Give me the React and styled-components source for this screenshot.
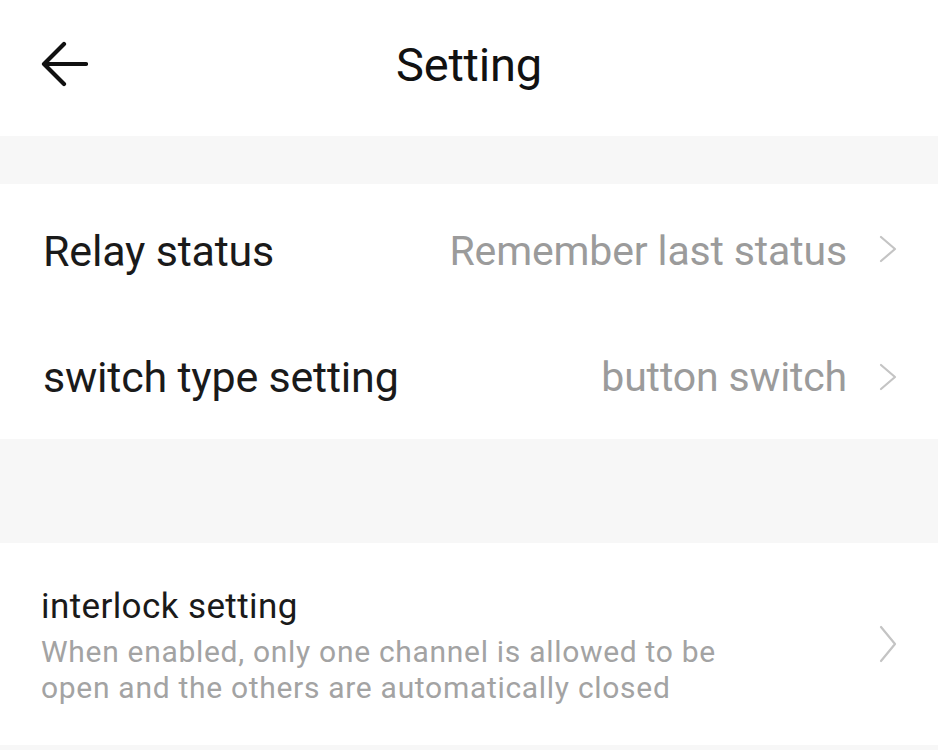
import React from "react";
import styled, { createGlobalStyle } from "styled-components";

const Global = createGlobalStyle`
  html, body { margin: 0; padding: 0; background: #ffffff; }
  body { font-family: Roboto, "Noto Sans", sans-serif; -webkit-font-smoothing: antialiased; }
`;

const Page = styled.div`
  width: 938px;
  height: 750px;
  background: #f7f7f7;
  overflow: hidden;
  display: flex;
  flex-direction: column;
`;

const Header = styled.header`
  height: 136px;
  background: #ffffff;
  display: grid;
  grid-template-columns: 120px 1fr 120px;
  align-items: center;
`;

const BackButton = styled.button`
  border: 0;
  background: none;
  padding: 0 0 8px 40px;
  display: flex;
  align-items: center;
  cursor: pointer;
`;

const Title = styled.h1`
  margin: 0 0 8px;
  text-align: center;
  font-size: 47px;
  font-weight: 400;
  color: #111111;
  letter-spacing: -0.2px;
`;

const Gap = styled.div`
  height: ${(p) => p.h}px;
  flex: none;
`;

const Section = styled.section`
  background: #ffffff;
  display: flex;
  flex-direction: column;
`;

const Row = styled.div`
  height: ${(p) => p.h}px;
  padding: 0 40px 0 43px;
  display: flex;
  align-items: center;
  gap: 31px;
`;

const Label = styled.div`
  flex: 1;
  font-size: 43px;
  color: #1a1a1a;
  letter-spacing: -0.2px;
  padding-top: ${(p) => p.pt || 0}px;
`;

const Value = styled.div`
  font-size: 41px;
  color: #9b9b9b;
  letter-spacing: -0.15px;
  padding-top: ${(p) => p.pt || 0}px;
`;

const Texts = styled.div`
  flex: 1;
  display: flex;
  flex-direction: column;
  margin-left: -2px;
  padding-top: 5px;
`;

const SubTitle = styled.div`
  font-size: 35px;
  color: #1a1a1a;
  letter-spacing: 0.4px;
  line-height: 40px;
  margin-bottom: 7px;
`;

const Desc = styled.div`
  font-size: 30px;
  line-height: 36px;
  color: #a3a3a3;
  letter-spacing: 0.7px;
  max-width: 700px;
`;

const Chevron = ({ h = 28 }) => (
  <svg width="20" height={h} viewBox={`0 0 20 ${h}`} fill="none">
    <path
      d={`M3 2 L17 ${h / 2} L3 ${h - 2}`}
      stroke="#c4c4c4"
      strokeWidth="2.2"
      strokeLinecap="round"
      strokeLinejoin="round"
    />
  </svg>
);

const BackArrow = () => (
  <svg width="48" height="46" viewBox="0 0 48 46" fill="none">
    <path
      d="M46 23 H6 M24 3 L4 23 L24 43"
      stroke="#111111"
      strokeWidth="4.2"
      strokeLinecap="round"
      strokeLinejoin="round"
    />
  </svg>
);

export default function App() {
  return (
    <>
      <Global />
      <Page>
        <Header>
          <BackButton aria-label="back">
            <BackArrow />
          </BackButton>
          <Title>Setting</Title>
          <div />
        </Header>
        <Gap h={48} />
        <Section>
          <Row h={130}>
            <Label pt={3}>Relay status</Label>
            <Value pt={3}>Remember last status</Value>
            <Chevron />
          </Row>
          <Row h={125}>
            <Label>switch type setting</Label>
            <Value>button switch</Value>
            <Chevron />
          </Row>
        </Section>
        <Gap h={104} />
        <Section>
          <Row h={202}>
            <Texts>
              <SubTitle>interlock setting</SubTitle>
              <Desc>
                When enabled, only one channel is allowed to be open and the
                others are automatically closed
              </Desc>
            </Texts>
            <Chevron h={38} />
          </Row>
        </Section>
      </Page>
    </>
  );
}
